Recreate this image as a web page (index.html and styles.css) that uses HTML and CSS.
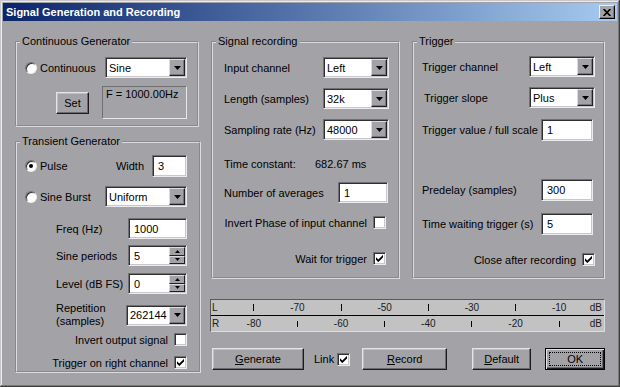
FILE: index.html
```html
<!DOCTYPE html>
<html lang="en">
<head>
    <meta charset="UTF-8">
    <title>Signal Generation and Recording</title>
    <link rel="stylesheet" href="styles.css">
</head>
<body>
    <div class="window">
        <div class="titlebar">
            <span class="title">Signal Generation and Recording</span>
            <span class="close-btn">
                <svg width="8" height="7" viewBox="0 0 8 7"><path d="M0.6 0 L7.4 7 M7.4 0 L0.6 7" stroke="#000" stroke-width="1.7"/></svg>
            </span>
        </div>

        <div class="client">
            <div class="left-col">
                <fieldset class="group continuous">
                    <legend>Continuous Generator</legend>
                    <div class="group-body">
                        <div class="row">
                            <span class="radio"></span>
                            <span class="opt-label">Continuous</span>
                            <div class="combo combo-wide">
                                <span class="combo-text">Sine</span>
                                <span class="combo-btn"><svg width="7" height="4" viewBox="0 0 7 4"><polygon points="0,0 7,0 3.5,4" fill="#000"/></svg></span>
                            </div>
                        </div>
                        <div class="row h33">
                            <button class="btn set-btn">Set</button>
                            <div class="freq-box">F = 1000.00Hz</div>
                        </div>
                    </div>
                </fieldset>

                <fieldset class="group transient">
                    <legend>Transient Generator</legend>
                    <div class="group-body">
                        <div class="row h22">
                            <span class="radio checked"></span>
                            <span class="opt-label">Pulse</span>
                            <span class="width-label">Width</span>
                            <div class="edit edit-xs">3</div>
                        </div>
                        <div class="row">
                            <span class="radio"></span>
                            <span class="opt-label">Sine Burst</span>
                            <div class="combo combo-wide">
                                <span class="combo-text">Uniform</span>
                                <span class="combo-btn"><svg width="7" height="4" viewBox="0 0 7 4"><polygon points="0,0 7,0 3.5,4" fill="#000"/></svg></span>
                            </div>
                        </div>
                        <div class="row">
                            <span class="field-label">Freq (Hz)</span>
                            <div class="edit edit-lg">1000</div>
                        </div>
                        <div class="row">
                            <span class="field-label">Sine periods</span>
                            <div class="edit edit-lg spin">
                                <span class="edit-text">5</span>
                                <span class="spin-btns">
                                    <span class="spin-btn"><svg width="5" height="3" viewBox="0 0 5 3"><polygon points="0,3 5,3 2.5,0" fill="#000"/></svg></span>
                                    <span class="spin-btn"><svg width="5" height="3" viewBox="0 0 5 3"><polygon points="0,0 5,0 2.5,3" fill="#000"/></svg></span>
                                </span>
                            </div>
                        </div>
                        <div class="row">
                            <span class="field-label">Level (dB FS)</span>
                            <div class="edit edit-lg spin">
                                <span class="edit-text">0</span>
                                <span class="spin-btns">
                                    <span class="spin-btn"><svg width="5" height="3" viewBox="0 0 5 3"><polygon points="0,3 5,3 2.5,0" fill="#000"/></svg></span>
                                    <span class="spin-btn"><svg width="5" height="3" viewBox="0 0 5 3"><polygon points="0,0 5,0 2.5,3" fill="#000"/></svg></span>
                                </span>
                            </div>
                        </div>
                        <div class="row h24">
                            <span class="field-label two-line">Repetition<br>(samples)</span>
                            <div class="combo combo-rep">
                                <span class="combo-text">262144</span>
                                <span class="combo-btn"><svg width="7" height="4" viewBox="0 0 7 4"><polygon points="0,0 7,0 3.5,4" fill="#000"/></svg></span>
                            </div>
                        </div>
                        <div class="row h17 end">
                            <span>Invert output signal</span>
                            <span class="check"></span>
                        </div>
                        <div class="row h17 end">
                            <span>Trigger on right channel</span>
                            <span class="check"><svg width="7" height="7" viewBox="0 0 7 7"><polygon points="0,2.3 2.3,4.6 7,-0.1 7,2.4 2.3,7.1 0,4.8" fill="#000"/></svg></span>
                        </div>
                    </div>
                </fieldset>
            </div>

            <div class="right-col">
                <div class="panels">
                    <fieldset class="group recording">
                        <legend>Signal recording</legend>
                        <div class="group-body">
                            <div class="row">
                                <span class="row-label">Input channel</span>
                                <div class="combo combo-mid">
                                    <span class="combo-text">Left</span>
                                    <span class="combo-btn"><svg width="7" height="4" viewBox="0 0 7 4"><polygon points="0,0 7,0 3.5,4" fill="#000"/></svg></span>
                                </div>
                            </div>
                            <div class="row">
                                <span class="row-label">Length (samples)</span>
                                <div class="combo combo-mid">
                                    <span class="combo-text">32k</span>
                                    <span class="combo-btn"><svg width="7" height="4" viewBox="0 0 7 4"><polygon points="0,0 7,0 3.5,4" fill="#000"/></svg></span>
                                </div>
                            </div>
                            <div class="row">
                                <span class="row-label">Sampling rate (Hz)</span>
                                <div class="combo combo-mid">
                                    <span class="combo-text">48000</span>
                                    <span class="combo-btn"><svg width="7" height="4" viewBox="0 0 7 4"><polygon points="0,0 7,0 3.5,4" fill="#000"/></svg></span>
                                </div>
                            </div>
                            <div class="row">
                                <span class="tc-label">Time constant:</span>
                                <span>682.67 ms</span>
                            </div>
                            <div class="row">
                                <span class="row-label">Number of averages</span>
                                <div class="edit edit-md">1</div>
                            </div>
                            <div class="row end">
                                <span>Invert Phase of input channel</span>
                                <span class="check check-rec"></span>
                            </div>
                            <div class="row end">
                                <span>Wait for trigger</span>
                                <span class="check check-rec"><svg width="7" height="7" viewBox="0 0 7 7"><polygon points="0,2.3 2.3,4.6 7,-0.1 7,2.4 2.3,7.1 0,4.8" fill="#000"/></svg></span>
                            </div>
                        </div>
                    </fieldset>

                    <fieldset class="group trigger">
                        <legend>Trigger</legend>
                        <div class="group-body">
                            <div class="row">
                                <span class="row-label">Trigger channel</span>
                                <div class="combo combo-mid">
                                    <span class="combo-text">Left</span>
                                    <span class="combo-btn"><svg width="7" height="4" viewBox="0 0 7 4"><polygon points="0,0 7,0 3.5,4" fill="#000"/></svg></span>
                                </div>
                            </div>
                            <div class="row">
                                <span class="row-label indent">Trigger slope</span>
                                <div class="combo combo-mid">
                                    <span class="combo-text">Plus</span>
                                    <span class="combo-btn"><svg width="7" height="4" viewBox="0 0 7 4"><polygon points="0,0 7,0 3.5,4" fill="#000"/></svg></span>
                                </div>
                            </div>
                            <div class="row h22">
                                <span class="row-label">Trigger value / full scale</span>
                                <div class="edit edit-trig">1</div>
                            </div>
                            <div class="row h22">
                                <span class="row-label">Predelay (samples)</span>
                                <div class="edit edit-trig">300</div>
                            </div>
                            <div class="row h22">
                                <span class="row-label">Time waiting trigger (s)</span>
                                <div class="edit edit-trig">5</div>
                            </div>
                            <div class="row end">
                                <span>Close after recording</span>
                                <span class="check"><svg width="7" height="7" viewBox="0 0 7 7"><polygon points="0,2.3 2.3,4.6 7,-0.1 7,2.4 2.3,7.1 0,4.8" fill="#000"/></svg></span>
                            </div>
                        </div>
                    </fieldset>
                </div>

                <div class="meter">
                    <div class="meter-row top">
                        <span class="channel">L</span>
                        <div class="scale">
                            <span class="tick"></span><span>-70</span>
                            <span class="tick"></span><span>-50</span>
                            <span class="tick"></span><span>-30</span>
                            <span class="tick"></span><span>-10</span>
                        </div>
                        <span class="unit">dB</span>
                    </div>
                    <div class="meter-row">
                        <span class="channel">R</span>
                        <div class="scale">
                            <span>-80</span><span class="tick short"></span>
                            <span>-60</span><span class="tick short"></span>
                            <span>-40</span><span class="tick short"></span>
                            <span>-20</span><span class="tick short"></span>
                        </div>
                        <span class="unit">dB</span>
                    </div>
                </div>

                <div class="btn-row">
                    <button class="btn btn-generate"><u>G</u>enerate</button>
                    <span class="link-label">Link</span>
                    <span class="check"><svg width="7" height="7" viewBox="0 0 7 7"><polygon points="0,2.3 2.3,4.6 7,-0.1 7,2.4 2.3,7.1 0,4.8" fill="#000"/></svg></span>
                    <button class="btn btn-record"><u>R</u>ecord</button>
                    <button class="btn btn-default"><u>D</u>efault</button>
                    <button class="btn btn-ok">OK</button>
                </div>
            </div>
        </div>
    </div>
</body>
</html>
```

FILE: styles.css
```css
* {
    margin: 0;
    padding: 0;
    box-sizing: border-box;
}

body {
    font-family: 'Liberation Sans', Arial, sans-serif;
    font-size: 11px;
    color: #000;
    background: #a3a3a7;
}

.window {
    width: 620px;
    height: 387px;
    padding: 3px;
    display: flex;
    flex-direction: column;
    background: #a3a3a7;
    box-shadow: inset -1px -1px 0 #404040, inset 1px 1px 0 #c8c8cc,
                inset -2px -2px 0 #78787c, inset 2px 2px 0 #ececf0;
}

.titlebar {
    height: 18px;
    flex-shrink: 0;
    display: flex;
    align-items: center;
    justify-content: space-between;
    padding: 0 2px 0 3px;
    background: linear-gradient(to right, #0a246a, #a6caf0);
}

.title {
    color: #fff;
    font-weight: bold;
}

.close-btn {
    width: 16px;
    height: 14px;
    display: flex;
    align-items: center;
    justify-content: center;
    background: #a3a3a7;
    border: 1px solid;
    border-color: #f0f0f0 #000 #000 #f0f0f0;
    box-shadow: inset -1px -1px 0 #78787c;
}

.client {
    flex: 1;
    display: flex;
    gap: 10px;
    padding: 14px 0 0 12px;
}

.left-col {
    width: 186px;
    display: flex;
    flex-direction: column;
    gap: 8px;
}

.right-col {
    width: 395px;
    display: flex;
    flex-direction: column;
}

.panels {
    display: flex;
    gap: 12px;
}

/* group boxes */
.group {
    border: 2px groove #dcdce0;
    min-width: 0;
}

.group legend {
    margin-left: 3px;
    padding: 0 2px;
    line-height: 13px;
}

.continuous { width: 184px; }
.transient { width: 186px; }
.recording { width: 189px; }
.trigger { width: 193px; }

.group-body {
    display: grid;
}

.continuous .group-body {
    padding: 9px 10px 6px 8px;
    grid-template-rows: 29px 33px;
}

.transient .group-body {
    padding: 7px 12px 0 8px;
    grid-template-rows: 31px 32px 27px 28px 30px 28px 23px 17px;
}

.recording .group-body {
    padding: 9px 9px 8px 11px;
    grid-template-rows: 31px 31px 34px 29px 30px 36px 21px;
}

.trigger .group-body {
    padding: 8px 8px 7px 8px;
    grid-template-rows: 31px 32px 60px 34px 36px 21px;
}

.row {
    display: flex;
    align-items: center;
    height: 21px;
}

.row.h17 { height: 17px; }
.row.h22 { height: 22px; }
.row.h24 { height: 24px; }
.row.h33 { height: 33px; }

.row.end {
    justify-content: flex-end;
}

.opt-label {
    margin-left: 3px;
    flex: 1;
}

.field-label {
    margin-left: 31px;
    flex: 1;
}

.two-line {
    line-height: 13px;
}

.row-label {
    flex: 1;
}

.row-label.indent {
    margin-left: 2px;
}

.width-label {
    margin-right: 8px;
}

.tc-label {
    width: 91px;
}

/* radio buttons */
.radio {
    width: 12px;
    height: 12px;
    flex-shrink: 0;
    position: relative;
    border-radius: 50%;
    background: #fff;
    border: 1px solid;
    border-color: #707074 #eeeeee #eeeeee #707074;
    box-shadow: inset 1px 1px 0 #303030;
}

.radio.checked::after {
    content: "";
    position: absolute;
    left: 3px;
    top: 3px;
    width: 4px;
    height: 4px;
    border-radius: 50%;
    background: #000;
}

/* sunken controls */
.combo,
.edit,
.check {
    background: #fff;
    border: 1px solid;
    border-color: #707074 #ececf0 #ececf0 #707074;
    box-shadow: inset 1px 1px 0 #303030, inset -1px -1px 0 #c8c8cc;
}

.combo {
    height: 21px;
    display: flex;
    padding: 1px;
}

.combo-wide { width: 82px; }
.combo-mid { width: 66px; }
.combo-rep { width: 61px; }

.combo-text {
    flex: 1;
    display: flex;
    align-items: center;
    padding-left: 2px;
    overflow: hidden;
    white-space: nowrap;
}

.combo-btn,
.spin-btn {
    display: flex;
    align-items: center;
    justify-content: center;
    background: #a3a3a7;
    border: 1px solid;
    border-color: #dcdce0 #202020 #202020 #dcdce0;
    box-shadow: inset -1px -1px 0 #78787c;
}

.combo-btn {
    width: 16px;
}

.edit {
    height: 21px;
    display: flex;
    align-items: center;
    padding-left: 5px;
}

.row.h22 .edit { height: 22px; }

.edit-xs { width: 35px; }
.edit-md { width: 50px; margin-right: 1px; }
.edit-lg { width: 59px; }
.edit-trig { width: 52px; margin-right: 2px; }

.spin {
    padding: 1px 1px 1px 5px;
}

.edit-text {
    flex: 1;
}

.spin-btns {
    width: 16px;
    align-self: stretch;
    display: flex;
    flex-direction: column;
}

.spin-btn {
    flex: 1;
    box-shadow: none;
}

.check {
    width: 13px;
    height: 13px;
    flex-shrink: 0;
    margin-left: 6px;
    display: flex;
    align-items: center;
    justify-content: center;
}

.check-rec {
    margin-right: 3px;
}

.freq-box {
    width: 85px;
    height: 33px;
    margin-left: 13px;
    padding: 1px 3px;
    line-height: 13px;
    border: 1px solid;
    border-color: #707074 #e8e8ec #e8e8ec #707074;
}

/* buttons */
.btn {
    font: inherit;
    color: #000;
    height: 22px;
    background: #a3a3a7;
    border: 1px solid;
    border-color: #e4e4e8 #1c1c1c #1c1c1c #e4e4e8;
    box-shadow: inset -1px -1px 0 #6c6c70, inset 1px 1px 0 #c0c0c4;
}

.set-btn {
    width: 33px;
    margin-left: 31px;
}

/* level meter scale */
.meter {
    width: 395px;
    margin: 20px 0 0 -1px;
    background: #c2c2c2;
    border: 1px solid;
    border-color: #58585c #dcdce0 #dcdce0 #58585c;
    font-size: 10px;
    color: #202020;
}

.meter-row {
    display: flex;
    align-items: center;
    height: 15px;
}

.meter-row.top {
    height: 16px;
    border-bottom: 1px solid #000;
}

.channel {
    width: 21px;
    padding-left: 1px;
}

.scale {
    width: 349px;
    display: grid;
    grid-template-columns: repeat(8, 1fr);
    justify-items: center;
    align-items: center;
}

.tick {
    width: 1px;
    height: 7px;
    background: #000;
}

.tick.short {
    height: 6px;
}

.unit {
    flex: 1;
    text-align: right;
    padding-right: 2px;
}

.btn-row {
    display: flex;
    align-items: center;
    margin-top: 16px;
}

.btn-generate {
    width: 92px;
    margin-left: 1px;
}

.link-label {
    margin-left: 10px;
}

.btn-row .check {
    margin-left: 3px;
}

.btn-record {
    width: 85px;
    margin-left: 12px;
}

.btn-default {
    width: 59px;
    margin-left: 25px;
}

.btn-ok {
    width: 60px;
    margin-left: 14px;
    position: relative;
    border-color: #000;
    box-shadow: inset 1px 1px 0 #e4e4e8, inset -1px -1px 0 #1c1c1c, inset -2px -2px 0 #6c6c70;
}

.btn-ok::after {
    content: "";
    position: absolute;
    inset: 3px;
    border: 1px dotted #000;
}
```
